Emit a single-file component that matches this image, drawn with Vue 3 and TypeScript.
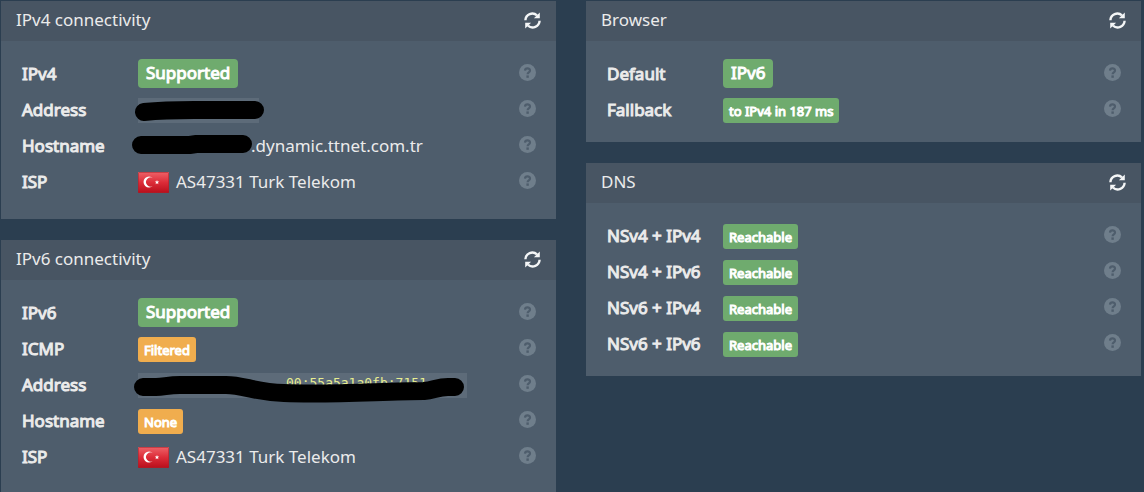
<script setup lang="ts">
interface Row {
  label: string
  kind: 'badge-lg' | 'success' | 'warning' | 'text' | 'flag' | 'mark4' | 'mark6' | 'host'
  value: string
}
interface Panel {
  title: string
  rows: Row[]
}

const columns: Panel[][] = [
  [
    {
      title: 'IPv4 connectivity',
      rows: [
        { label: 'IPv4', kind: 'badge-lg', value: 'Supported' },
        { label: 'Address', kind: 'mark4', value: '' },
        { label: 'Hostname', kind: 'host', value: '.dynamic.ttnet.com.tr' },
        { label: 'ISP', kind: 'flag', value: 'AS47331 Turk Telekom' },
      ],
    },
    {
      title: 'IPv6 connectivity',
      rows: [
        { label: 'IPv6', kind: 'badge-lg', value: 'Supported' },
        { label: 'ICMP', kind: 'warning', value: 'Filtered' },
        { label: 'Address', kind: 'mark6', value: '00:55a5a1a0fb:7151' },
        { label: 'Hostname', kind: 'warning', value: 'None' },
        { label: 'ISP', kind: 'flag', value: 'AS47331 Turk Telekom' },
      ],
    },
  ],
  [
    {
      title: 'Browser',
      rows: [
        { label: 'Default', kind: 'badge-lg', value: 'IPv6' },
        { label: 'Fallback', kind: 'success', value: 'to IPv4 in 187 ms' },
      ],
    },
    {
      title: 'DNS',
      rows: [
        { label: 'NSv4 + IPv4', kind: 'success', value: 'Reachable' },
        { label: 'NSv4 + IPv6', kind: 'success', value: 'Reachable' },
        { label: 'NSv6 + IPv4', kind: 'success', value: 'Reachable' },
        { label: 'NSv6 + IPv6', kind: 'success', value: 'Reachable' },
      ],
    },
  ],
]
</script>

<template>
  <main class="page">
    <div v-for="(column, c) in columns" :key="c" class="column">
      <section v-for="panel in column" :key="panel.title" class="panel">
        <header class="panel-head">
          <h2>{{ panel.title }}</h2>
          <button type="button" class="icon-button" :aria-label="`Refresh ${panel.title}`">
            <svg viewBox="0 0 17 17" width="17" height="17" aria-hidden="true">
              <path d="M1.4 8.2A7 7 0 0 1 13 3.3M15.6 8.8A7 7 0 0 1 4 13.7" fill="none" stroke="#f4f6f7" stroke-width="2.4" />
              <path d="M15.8 0.4V6.3H9.9ZM1.2 16.6V10.7H7.1Z" fill="#f4f6f7" />
            </svg>
          </button>
        </header>
        <dl class="rows">
          <div v-for="row in panel.rows" :key="row.label" class="row" :class="{ tall: row.kind === 'flag' }">
            <dt>{{ row.label }}</dt>
            <dd>
              <span v-if="row.kind === 'badge-lg'" class="badge large">{{ row.value }}</span>
              <span v-else-if="row.kind === 'success' || row.kind === 'warning'" class="badge" :class="row.kind">{{ row.value }}</span>
              <template v-else-if="row.kind === 'flag'">
                <svg class="flag" viewBox="0 0 31 21" width="31" height="21" role="img" aria-label="Turkey">
                  <defs>
                    <linearGradient :id="`flag-${panel.title.slice(0, 4)}`" x1="0" y1="0" x2="0" y2="1">
                      <stop offset="0" stop-color="#ee6268" />
                      <stop offset="0.5" stop-color="#dc2c38" />
                      <stop offset="1" stop-color="#b80e1b" />
                    </linearGradient>
                  </defs>
                  <rect width="31" height="21" rx="1" :fill="`url(#flag-${panel.title.slice(0, 4)})`" />
                  <rect x="0.5" y="0.5" width="30" height="20" rx="1" fill="none" stroke="#a9222c" stroke-opacity="0.55" />
                  <path d="M15 6.2A5.5 5.5 0 1 0 15 13.8A4.5 4.5 0 1 1 15 6.2Z" fill="#fff" />
                  <path d="M19 8L19.6 9.5L21.2 9.6L20 10.6L20.4 12.2L19 11.3L17.6 12.2L18 10.6L16.8 9.6L18.4 9.5Z" fill="#fff" />
                </svg>
                {{ row.value }}
              </template>
              <code v-else-if="row.kind === 'mark4'" class="address short">
                <svg class="mark" viewBox="0 0 130 20" width="130" height="20" aria-hidden="true">
                  <path d="M10 11C30 9 40 9 60 9H121" fill="none" stroke="#000" stroke-width="18" stroke-linecap="round" />
                </svg>
              </code>
              <code v-else-if="row.kind === 'mark6'" class="address long">
                {{ row.value }}
                <svg class="mark" viewBox="0 0 332 30" width="332" height="30" aria-hidden="true">
                  <path d="M9 11H22C30 11 34 9 46 9H92C110 9 120 16 150 17C200 19 250 15 290 15C300 14 304 11 314 11H321" fill="none" stroke="#000" stroke-width="18" stroke-linecap="round" />
                </svg>
              </code>
              <span v-else class="host">
                <svg class="mark" viewBox="0 0 122 19" width="122" height="19" aria-hidden="true">
                  <path d="M9 10H58L64 9H111" fill="none" stroke="#000" stroke-width="18" stroke-linecap="round" />
                </svg>
                {{ row.value }}
              </span>
            </dd>
            <button type="button" class="icon-button help" :aria-label="`Help: ${row.label}`">
              <svg viewBox="0 0 17 17" width="17" height="17" aria-hidden="true">
                <circle cx="8.5" cy="8.5" r="8.5" fill="#6f7e8b" />
                <path d="M6 6.6C6.1 3.5 11 3.6 11 6.5C11 8.4 8.6 8.2 8.6 10.2" fill="none" stroke="#4e5d6c" stroke-width="2.2" />
                <rect x="7.4" y="11.4" width="2.4" height="2.4" fill="#4e5d6c" />
              </svg>
            </button>
          </div>
        </dl>
      </section>
    </div>
  </main>
</template>

<style>
body {
  margin: 0;
  background: #2b3e50;
}
</style>

<style scoped>
.page {
  display: grid;
  grid-template-columns: 1fr 1fr;
  gap: 30px;
  padding: 1px 3px 0 1px;
  color: #ebebeb;
  font-family: "Noto Sans", sans-serif;
  font-size: 17px;
  line-height: 24px;
}
.column {
  display: flex;
  flex-direction: column;
  gap: 21px;
}
.panel {
  background: #4e5d6c;
}
.panel-head {
  display: flex;
  align-items: center;
  justify-content: space-between;
  box-sizing: border-box;
  height: 40px;
  padding: 0 15px 2px;
  background: #485563;
}
h2 {
  margin: 0;
  font-size: 17px;
  font-weight: 400;
}
.icon-button {
  display: block;
  padding: 0;
  border: 0;
  background: none;
  cursor: pointer;
}
.icon-button svg {
  display: block;
}
.rows {
  margin: 0;
  padding: 15px 20px 14px 21px;
}
.row {
  display: grid;
  grid-template-columns: 116px 1fr auto;
  align-items: center;
  min-height: 36px;
}
.tall {
  padding-bottom: 5px;
}
dt {
  -webkit-text-stroke: 1px #ebebeb;
}
dd {
  display: flex;
  align-items: center;
  margin: 0;
  white-space: nowrap;
}
.help {
  padding-bottom: 4px;
}
.badge {
  padding: 1px 6px 0;
  border-radius: 3px;
  background: #6fab6e;
  color: #fff;
  font-size: 13px;
  -webkit-text-stroke: 1px #fff;
}
.large {
  margin-bottom: 1px;
  padding: 2px 8px 3px;
  border-radius: 4px;
  font-size: 17px;
}
.warning {
  background: #f0ad4e;
}
.flag {
  margin-right: 7px;
}
.address {
  position: relative;
  box-sizing: border-box;
  height: 25px;
  background: #5d6b79;
  color: #e8ee90;
  font-family: "DejaVu Sans Mono", monospace;
  font-size: 13px;
  line-height: 20px;
}
.short {
  width: 121px;
}
.long {
  width: 329px;
  padding-left: 148px;
}
.mark {
  position: absolute;
  top: 3px;
  left: -4px;
}
.host {
  position: relative;
  padding-left: 113px;
}
.host .mark {
  top: 1px;
  left: -6px;
}
</style>
